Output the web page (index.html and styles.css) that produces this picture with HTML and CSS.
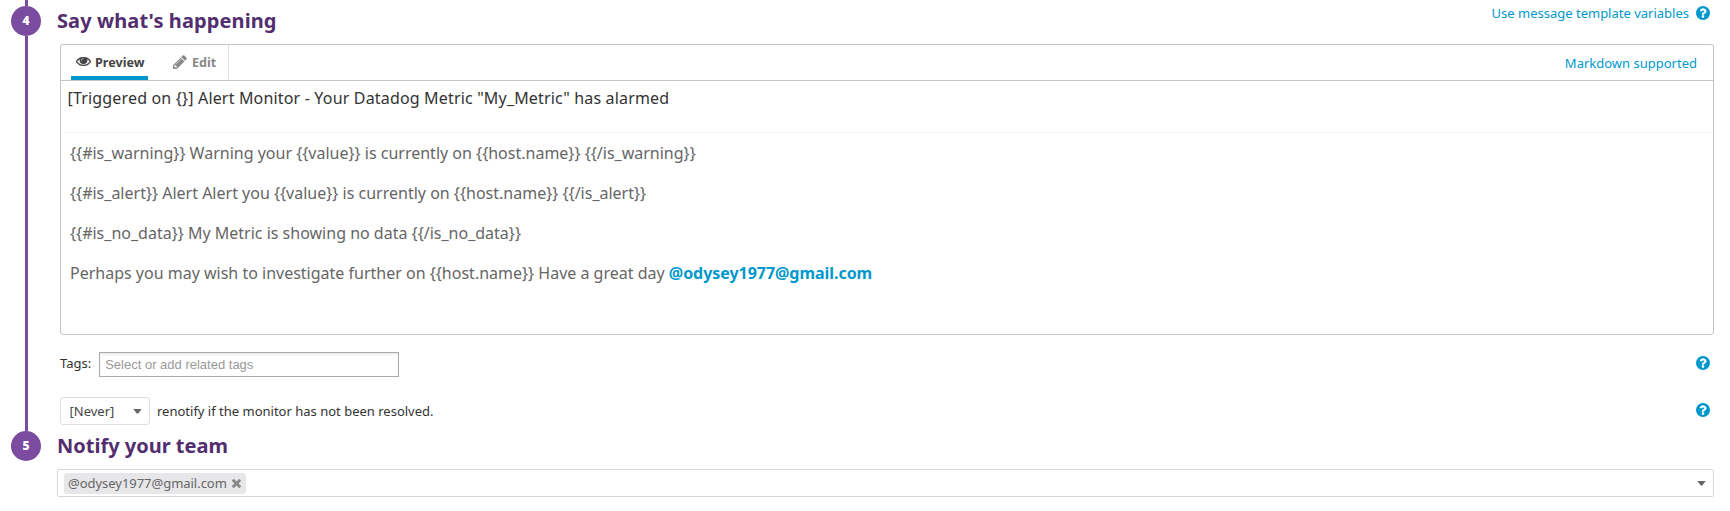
FILE: index.html
```html
<!DOCTYPE html>
<html lang="en">
<head>
<meta charset="utf-8">
<title>Monitor editor</title>
<link rel="stylesheet" href="styles.css">
</head>
<body>
<svg class="defs" width="0" height="0">
  <symbol id="eye" viewBox="0 384 1792 1152" preserveAspectRatio="none"><path stroke="currentColor" stroke-width="50" d="M1664 960q-152-236-381-353 61 104 61 225 0 185-131.500 316.500t-316.500 131.500-316.500-131.500-131.500-316.500q0-121 61-225-229 117-381 353 133 205 333.500 326.500t434.500 121.500 434.500-121.500 333.500-326.500zm-720-384q0-20-14-34t-34-14q-125 0-214.500 89.500t-89.500 214.500q0 20 14 34t34 14 34-14 14-34q0-86 61-147t147-61q20 0 34-14t14-34zm848 384q0 34-20 69-140 230-376.500 368.500t-499.500 138.500-499.500-139-376.500-368q-20-35-20-69t20-69q140-229 376.500-368t499.500-139 499.500 139 376.500 368q20 35 20 69z"/></symbol>
  <symbol id="pencil" viewBox="128 128 1536 1536"><path d="M491 1536l91-91-235-235-91 91v107h128v128h107zm523-928q0-22-22-22-10 0-17 7l-542 542q-7 7-7 17 0 22 22 22 10 0 17-7l542-542q7-7 7-17zm-54-192l416 416-832 832h-416v-416zm683 96q0 53-37 90l-166 166-416-416 166-165q36-38 90-38 53 0 91 38l235 234q37 39 37 91z"/></symbol>
  <symbol id="help" viewBox="128 128 1536 1536"><path d="M1024 1376v-192q0-14-9-23t-23-9h-192q-14 0-23 9t-9 23v192q0 14 9 23t23 9h192q14 0 23-9t9-23zm256-672q0-88-55.500-163t-138.500-116-170-41q-243 0-371 213-15 24 8 42l132 100q7 6 19 6 16 0 25-12 53-68 86-92 34-24 86-24 48 0 85.500 26t37.500 59q0 38-20 61t-68 45q-63 28-115.500 86.500t-52.500 125.500v36q0 14 9 23t23 9h192q14 0 23-9t9-23q0-19 21.500-49.500t54.500-49.500q32-18 49-28.500t46-35 44.500-48 28-60.500 12.500-81zm384 192q0 209-103 385.500t-279.500 279.500-385.500 103-385.500-103-279.500-279.500-103-385.500 103-385.500 279.500-279.500 385.500-103 385.500 103 279.500 279.500 103 385.500z"/></symbol>
  <symbol id="times" viewBox="302 366 1188 1188"><path d="M1490 1322q0 40-28 68l-136 136q-28 28-68 28t-68-28l-294-294-294 294q-28 28-68 28t-68-28l-136-136q-28-28-28-68t28-68l294-294-294-294q-28-28-28-68t28-68l136-136q28-28 68-28t68 28l294 294 294-294q28-28 68-28t68 28l136 136q28 28 28 68t-28 68l-294 294 294 294q28 28 28 68z"/></symbol>
</svg>
<main class="steps">
  <section class="step step-message">
    <div class="rail"><span class="lead"></span><span class="num">4</span><span class="line"></span></div>
    <div class="body">
      <header class="head">
        <h2>Say what's happening</h2>
        <a class="variables">Use message template variables <svg class="help"><use href="#help"/></svg></a>
      </header>
      <div class="panel">
        <div class="bar">
          <div class="tabs">
            <div class="tab active"><svg class="eye"><use href="#eye"/></svg><span>Preview</span></div>
            <div class="tab"><svg class="pencil"><use href="#pencil"/></svg><span>Edit</span></div>
          </div>
          <a class="markdown">Markdown supported</a>
        </div>
        <div class="subject"><span>[Triggered on {}] Alert Monitor - Your Datadog Metric "My_Metric" has alarmed</span></div>
        <div class="message">
          <p>{{#is_warning}} Warning your {{value}} is currently on {{host.name}} {{/is_warning}}</p>
          <p>{{#is_alert}} Alert Alert you {{value}} is currently on {{host.name}} {{/is_alert}}</p>
          <p>{{#is_no_data}} My Metric is showing no data {{/is_no_data}}</p>
          <p>Perhaps you may wish to investigate further on {{host.name}} Have a great day <b>@odysey1977@gmail.com</b></p>
        </div>
      </div>
      <div class="row tags">
        <label>Tags:</label>
        <div class="input">Select or add related tags</div>
        <svg class="help"><use href="#help"/></svg>
      </div>
      <div class="row renotify">
        <div class="select"><span>[Never]</span><i class="caret"></i></div>
        <span class="note">renotify if the monitor has not been resolved.</span>
        <svg class="help"><use href="#help"/></svg>
      </div>
    </div>
  </section>
  <section class="step">
    <div class="rail"><span class="num">5</span></div>
    <div class="body">
      <h2>Notify your team</h2>
      <div class="recipients">
        <span class="chip"><span>@odysey1977@gmail.com</span><svg><use href="#times"/></svg></span>
        <i class="caret"></i>
      </div>
    </div>
  </section>
</main>
</body>
</html>
```
FILE: styles.css
```css
* { box-sizing: border-box; }
body { margin: 0; background: #fff; color: #333; font: 13px/18px "Noto Sans", sans-serif; overflow: hidden; }
svg { fill: currentColor; flex: none; display: block; }
.defs { position: absolute; }
.steps { height: 511px; }
.step { display: grid; grid-template-columns: 57px 1fr; }
.step-message { height: 431px; }
.rail { display: flex; flex-direction: column; align-items: center; width: 30px; margin-left: 11px; }
.lead { width: 3px; height: 6px; background: #7b4ba0; }
.line { width: 3px; flex: 1; background: #7b4ba0; }
.num { width: 30px; height: 30px; border-radius: 50%; background: #7b4ba0; color: #fff; font-weight: 900; font-size: 12px; line-height: 30px; text-align: center; }
.body { padding-right: 16px; }
h2 { margin: 0; font-size: 20px; line-height: 30px; font-weight: 700; color: #522e6f; }
.head h2 { letter-spacing: 0.1px; }
a { color: #0098cc; }
.head { display: flex; justify-content: space-between; height: 44px; padding-top: 6px; }
.variables { display: flex; gap: 7px; height: 14px; line-height: 14px; margin-right: 4px; }
.help { width: 14px; height: 14px; color: #0098cc; }
.panel { height: 291px; margin-left: 3px; border: 1px solid #c5c5c5; border-radius: 3px; }
.bar { display: flex; justify-content: space-between; height: 36px; border-bottom: 1px solid #c5c5c5; }
.tabs { display: flex; gap: 22px; width: 168px; padding-left: 10px; border-right: 1px solid #ddd; }
.tab { display: flex; align-items: center; gap: 4px; height: 35px; padding: 0 3px 0; color: #888; font-weight: 700; font-size: 12.6px; }
.active { width: 77px; color: #444; border-bottom: 4px solid #0098cc; padding: 4px 0 0 5px; }
.eye { width: 15px; height: 9px; margin-bottom: 3px; }
.pencil { width: 14px; height: 14px; margin: 0 1px 2px 0; }
.markdown { line-height: 36px; margin-right: 16px; }
.subject { height: 52px; margin: 0 3px; padding: 6px 3.5px; border-bottom: 1px solid #f4f4f4; font-size: 16px; line-height: 22px; letter-spacing: 0.17px; }
.message { padding: 9px; color: #666; font-size: 16px; line-height: 22px; }
.message p { margin: 0 0 18px; }
.message b { color: #0098cc; letter-spacing: -0.04px; }
.row { display: flex; align-items: center; margin-left: 3px; padding-right: 4px; }
.row .help { margin-left: auto; margin-bottom: 2px; }
.tags { height: 25px; margin-top: 17px; }
.tags label { padding-bottom: 3px; }
.tags .help { margin-bottom: 4px; }
.input { width: 300px; height: 25px; margin-left: 8px; padding: 0 5px; border: 1px solid #aaa; box-shadow: inset 0 2px 2px #eee; color: #999; font: 13px/23px "Liberation Sans", Arial, sans-serif; }
.renotify { height: 28px; margin-top: 20px; }
.select { display: flex; align-items: center; justify-content: space-between; width: 90px; height: 28px; padding: 0 7px 0 8.5px; border: 1px solid #ddd; border-radius: 3px; color: #444; }
.caret { width: 9px; height: 5px; background: #666; clip-path: polygon(0 0, 100% 0, 58% 100%, 42% 100%); }
.note { margin-left: 7px; }
.recipients { display: flex; align-items: center; justify-content: space-between; height: 28px; margin-top: 8px; padding: 0 7px 0 6px; border: 1px solid #d8d8dc; border-radius: 2px; }
.chip { display: flex; align-items: center; gap: 5px; height: 21px; padding: 0 5px 0 4px; border-radius: 3px; background: #e7e7e9; color: #666; letter-spacing: -0.03px; }
.chip svg { width: 9px; height: 9px; color: #888; }
```
